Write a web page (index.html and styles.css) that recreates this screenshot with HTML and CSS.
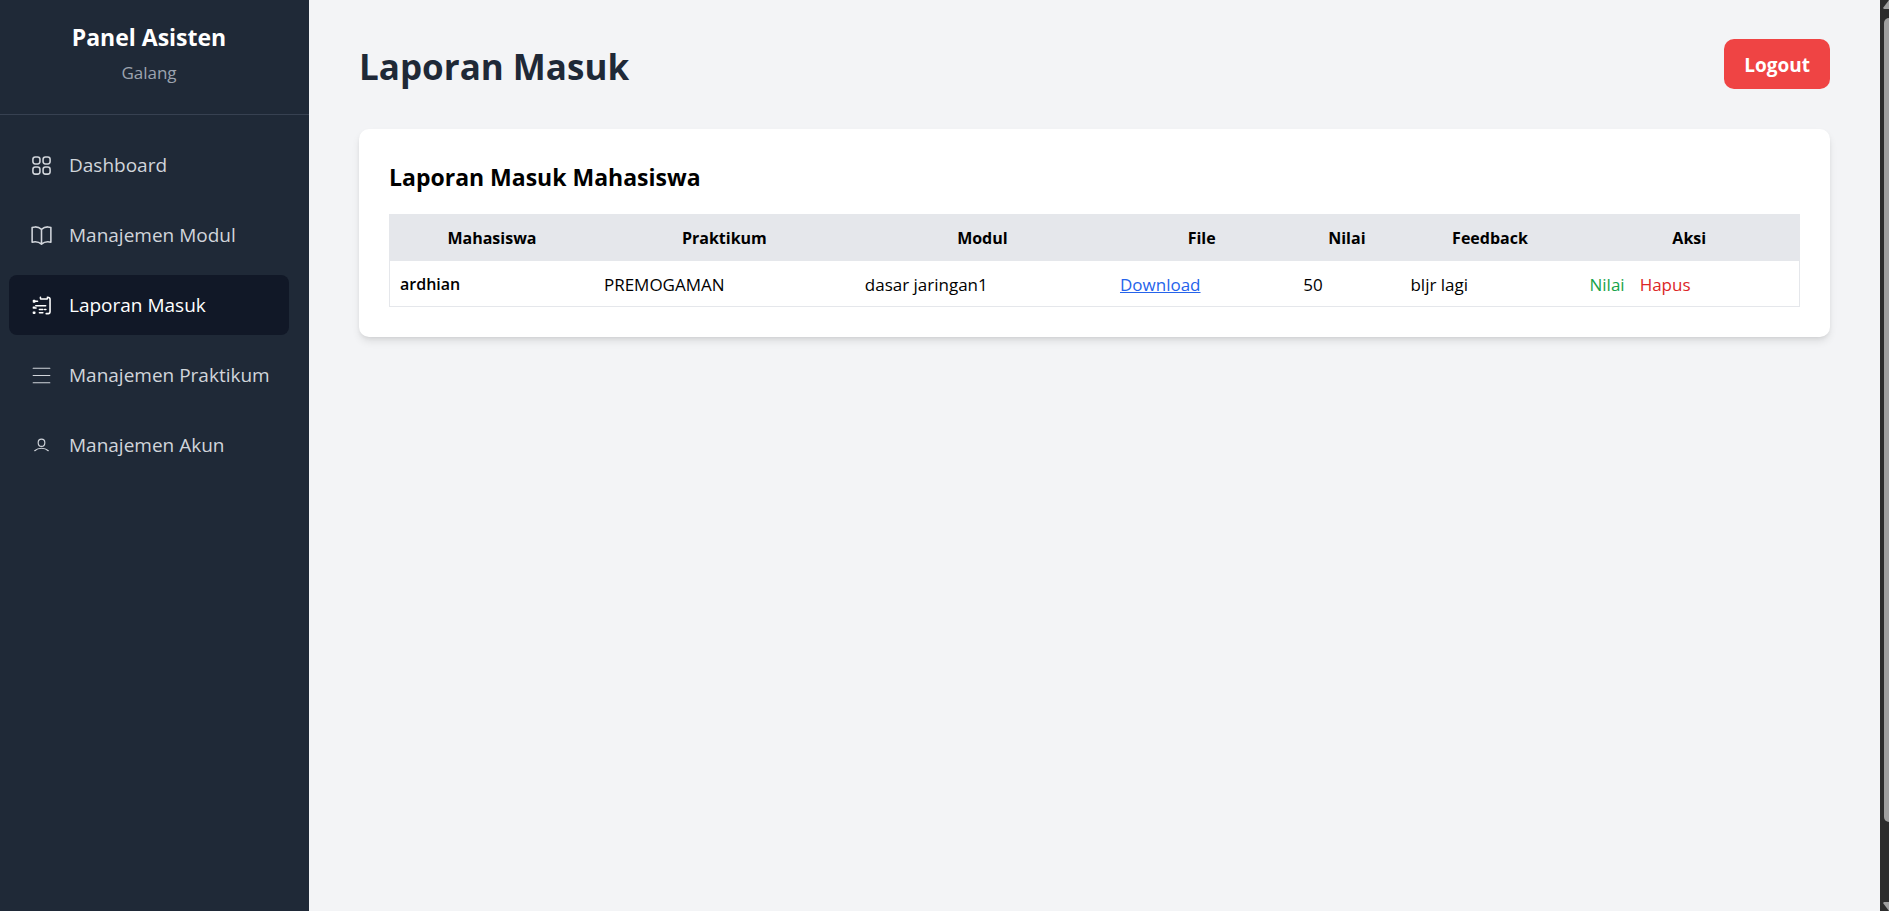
FILE: index.html
```html
<!DOCTYPE html>
<html lang="id">
<head>
<meta charset="utf-8">
<meta name="viewport" content="width=device-width, initial-scale=1">
<title>Panel Asisten - Laporan Masuk</title>
<link rel="stylesheet" href="styles.css">
</head>
<body class="app">
<aside class="sidebar">
  <div class="brand">
    <h3 class="brand-title">Panel Asisten</h3>
    <p class="brand-user">Galang</p>
  </div>
  <nav class="menu">
    <a class="menu-item" href="#">
      <svg class="icon" viewBox="0 0 24 24" aria-hidden="true"><path d="M3.75 6A2.25 2.25 0 0 1 6 3.75h2.25A2.25 2.25 0 0 1 10.5 6v2.25a2.25 2.25 0 0 1-2.25 2.25H6a2.25 2.25 0 0 1-2.25-2.25V6ZM3.75 15.75A2.25 2.25 0 0 1 6 13.5h2.25a2.25 2.25 0 0 1 2.25 2.25V18a2.25 2.25 0 0 1-2.25 2.25H6A2.25 2.25 0 0 1 3.75 18v-2.25ZM13.5 6a2.25 2.25 0 0 1 2.25-2.25H18A2.25 2.25 0 0 1 20.25 6v2.25A2.25 2.25 0 0 1 18 10.5h-2.25a2.25 2.25 0 0 1-2.25-2.25V6ZM13.5 15.75a2.25 2.25 0 0 1 2.25-2.25H18a2.25 2.25 0 0 1 2.25 2.25V18A2.25 2.25 0 0 1 18 20.25h-2.25A2.25 2.25 0 0 1 13.5 18v-2.25Z"/></svg>
      <span>Dashboard</span>
    </a>
    <a class="menu-item" href="#">
      <svg class="icon" viewBox="0 0 24 24" aria-hidden="true"><path d="M12 6.042A8.967 8.967 0 0 0 6 3.75c-1.052 0-2.062.18-3 .512v14.25A8.987 8.987 0 0 1 6 18c2.305 0 4.408.867 6 2.292m0-14.25a8.966 8.966 0 0 1 6-2.292c1.052 0 2.062.18 3 .512v14.25A8.987 8.987 0 0 0 18 18a8.967 8.967 0 0 0-6 2.292m0-14.25v14.25"/></svg>
      <span>Manajemen Modul</span>
    </a>
    <a class="menu-item active" href="#" aria-current="page">
      <svg class="icon" viewBox="0 0 24 24" aria-hidden="true"><path d="M11 4c-.2 1.2.1 1.8.8 1.8h5c.8 0 1.1-.6.9-1.8 1.6 0 2.5.6 2.5 1.9v12.2c0 1.1-.7 1.7-1.7 1.7h-2M4.2 7.9h4M4.3 7.2h1.2M4.3 8.7h1.2M6.5 12.2H16M4.2 13.6h1.2M4.2 14.4h2.6M10 15.9h3.3M15 15.9h1.2M4.2 18.6h1.4M4.2 19.3h1.4M10 19h3.3"/></svg>
      <span>Laporan Masuk</span>
    </a>
    <a class="menu-item" href="#">
      <svg class="icon thin" viewBox="0 0 24 24" aria-hidden="true"><path d="M4 5h16M4 12h16M4 19h16"/></svg>
      <span>Manajemen Praktikum</span>
    </a>
    <a class="menu-item" href="#">
      <svg class="icon thin" viewBox="0 0 24 24" aria-hidden="true"><ellipse cx="12" cy="9.4" rx="3.2" ry="3.5"/><path d="M5.5 17c3.4-3.1 9.600-3.100 13 0"/></svg>
      <span>Manajemen Akun</span>
    </a>
  </nav>
</aside>
<main class="main">
  <header class="topbar">
    <h1 class="page-title">Laporan Masuk</h1>
    <button class="logout" type="button">Logout</button>
  </header>
  <section class="card">
    <h2 class="card-title">Laporan Masuk Mahasiswa</h2>
    <table class="reports">
      <colgroup><col class="c-name"><col class="c-course"><col class="c-module"><col class="c-file"><col class="c-score"><col class="c-feedback"><col class="c-action"></colgroup>
      <thead>
        <tr><th>Mahasiswa</th><th>Praktikum</th><th>Modul</th><th>File</th><th>Nilai</th><th>Feedback</th><th>Aksi</th></tr>
      </thead>
      <tbody>
        <tr>
          <td class="student">ardhian</td>
          <td>PREMOGAMAN</td>
          <td>dasar jaringan1</td>
          <td><a class="download" href="#">Download</a></td>
          <td>50</td>
          <td>bljr lagi</td>
          <td><div class="actions"><a class="grade" href="#">Nilai</a><a class="delete" href="#">Hapus</a></div></td>
        </tr>
      </tbody>
    </table>
  </section>
</main>
<div class="scrollbar" aria-hidden="true">
  <svg class="arrow" viewBox="0 0 6 9"><path d="M0 8L6 0V9H1Z"/></svg>
  <div class="track"><div class="thumb"></div></div>
  <svg class="arrow" viewBox="0 0 6 9"><path d="M0 1L6 9V0H1Z"/></svg>
</div>
</body>
</html>
```
FILE: styles.css
```css
* { box-sizing: border-box; }
.app {
  margin: 0;
  min-height: 100vh;
  display: flex;
  background: #f3f4f6;
  color: #000;
  font-family: "Open Sans", "Noto Sans", sans-serif;
  font-size: 17px;
  line-height: 25px;
}
h1, h2, h3, p { margin: 0; }
a { color: inherit; text-decoration: none; }

.sidebar { width: 309px; flex: none; background: #1f2937; color: #fff; }
.brand {
  padding: 20px 20px 29px 9px;
  border-bottom: 1px solid #374151;
  text-align: center;
}
.brand-title { font-size: 23px; line-height: 35px; font-weight: 700; }
.brand-user { margin-top: 5px; color: #9ca3af; }
.menu {
  display: flex;
  flex-direction: column;
  gap: 10px;
  padding: 20px 20px 20px 9px;
}
.menu-item {
  display: flex;
  align-items: center;
  gap: 15px;
  padding: 15px 20px;
  border-radius: 8px;
  color: #d1d5db;
  font-size: 19px;
  line-height: 30px;
  white-space: nowrap;
}
.menu-item.active { background: #111827; color: #fff; }
.icon {
  width: 25px;
  height: 25px;
  flex: none;
  fill: none;
  stroke: currentColor;
  stroke-width: 1.5;
  stroke-linecap: round;
  stroke-linejoin: round;
}
.icon.thin { stroke-width: 1.1; }

.main { flex: 1; min-width: 0; padding: 39px 50px; }
.topbar {
  display: flex;
  align-items: flex-end;
  justify-content: space-between;
  margin-bottom: 40px;
}
.page-title { color: #1f2937; font-size: 35px; line-height: 45px; font-weight: 700; }
.logout {
  padding: 11px 20px 9px;
  border: 0;
  border-radius: 10px;
  background: #ef4444;
  color: #fff;
  font: 700 19px/30px "Open Sans", "Noto Sans", sans-serif;
}
.card {
  padding: 31px 30px 30px;
  border-radius: 10px;
  background: #fff;
  box-shadow: 0 5px 8px -1px rgba(0, 0, 0, .1), 0 2px 5px -2px rgba(0, 0, 0, .1);
}
.card-title { margin-bottom: 19px; font-size: 23px; line-height: 35px; font-weight: 700; }
.reports {
  width: 100%;
  table-layout: fixed;
  border-collapse: collapse;
  border: 1px solid #e5e7eb;
}
.reports thead { background: #e5e7eb; }
.reports tr { border-bottom: 1px solid #e5e7eb; }
.reports th, .reports td { padding: 11px 10px 9px; }
.reports th { text-align: center; font-size: 16px; font-weight: 700; }
.reports td { text-align: left; }
.c-name { width: 14.5%; }
.c-course { width: 18.5%; }
.c-module { width: 18.1%; }
.c-file { width: 13%; }
.c-score { width: 7.6%; }
.c-feedback { width: 12.7%; }
.c-action { width: 15.6%; }
.reports .student { font-size: 16px; font-weight: 600; }
.download { color: #2563eb; text-decoration: underline; }
.actions { display: flex; gap: 15px; }
.grade { color: #16a34a; }
.delete { color: #dc2626; }

.scrollbar {
  width: 9px;
  height: 100vh;
  flex: none;
  display: flex;
  flex-direction: column;
  background: #2c2c2c;
}
.arrow { width: 6px; height: 9px; margin-left: 3px; fill: #9f9f9f; }
.track { flex: 1; padding: 9px 0 0 4px; }
.thumb { height: 91%; border-radius: 5px 0 0 5px; background: #9f9f9f; }
```
